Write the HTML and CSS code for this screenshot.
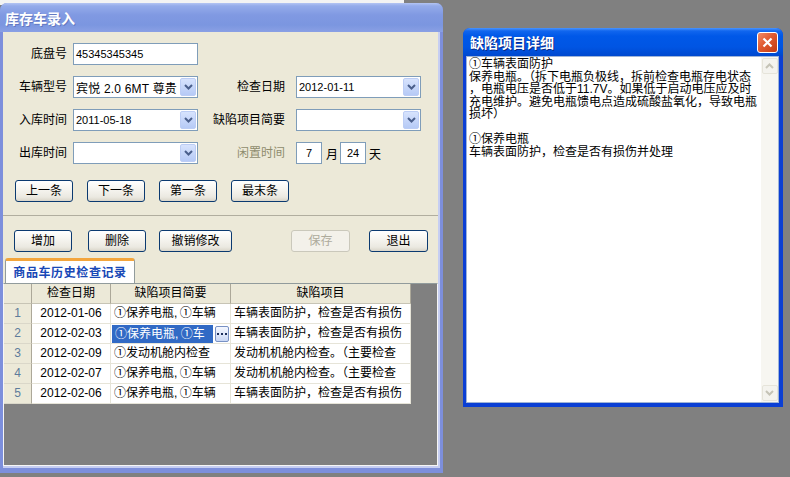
FILE: index.html
```html
<!DOCTYPE html>
<html lang="zh-CN">
<head>
<meta charset="utf-8">
<title>库存车录入</title>
<link rel="stylesheet" href="styles.css">
</head>
<body>
<div class="desktop">
  <div class="backstrip"></div>

  <section class="win win-main">
    <header class="title title-inactive"><span>库存车录入</span></header>
    <div class="client">
      <div class="panel">
        <div class="row">
          <span class="lb">底盘号</span>
          <div class="field"><span class="val">45345345345</span></div>
        </div>
        <div class="row">
          <span class="lb">车辆型号</span>
          <div class="field"><span class="val wide">宾悦 2.0 6MT 尊贵</span><span class="drop"><svg width="9" height="6" viewBox="0 0 9 6"><path d="M1 1 L4.5 4.5 L8 1" stroke="#4a5f8c" stroke-width="2" fill="none"/></svg></span></div>
          <span class="lb lb2">检查日期</span>
          <div class="field"><span class="val">2012-01-11</span><span class="drop"><svg width="9" height="6" viewBox="0 0 9 6"><path d="M1 1 L4.5 4.5 L8 1" stroke="#4a5f8c" stroke-width="2" fill="none"/></svg></span></div>
        </div>
        <div class="row">
          <span class="lb">入库时间</span>
          <div class="field"><span class="val">2011-05-18</span><span class="drop"><svg width="9" height="6" viewBox="0 0 9 6"><path d="M1 1 L4.5 4.5 L8 1" stroke="#4a5f8c" stroke-width="2" fill="none"/></svg></span></div>
          <span class="lb lb2">缺陷项目简要</span>
          <div class="field"><span class="val"></span><span class="drop"><svg width="9" height="6" viewBox="0 0 9 6"><path d="M1 1 L4.5 4.5 L8 1" stroke="#4a5f8c" stroke-width="2" fill="none"/></svg></span></div>
        </div>
        <div class="row">
          <span class="lb">出库时间</span>
          <div class="field"><span class="val"></span><span class="drop"><svg width="9" height="6" viewBox="0 0 9 6"><path d="M1 1 L4.5 4.5 L8 1" stroke="#4a5f8c" stroke-width="2" fill="none"/></svg></span></div>
          <span class="lb lb2 disabled">闲置时间</span>
          <div class="field small"><span class="val">7</span></div>
          <span class="unit">月</span>
          <div class="field small"><span class="val">24</span></div>
          <span class="unit unit2">天</span>
        </div>
        <div class="navbtns">
          <button class="btn">上一条</button>
          <button class="btn">下一条</button>
          <button class="btn">第一条</button>
          <button class="btn">最末条</button>
        </div>
      </div>

      <div class="actions">
        <button class="btn">增加</button>
        <button class="btn b-del">删除</button>
        <button class="btn b-undo">撤销修改</button>
        <button class="btn b-save" disabled>保存</button>
        <button class="btn b-exit">退出</button>
      </div>

      <div class="tabs"><div class="tab">商品车历史检查记录</div></div>

      <div class="gridwrap">
        <div class="grid">
          <div class="c h"></div>
          <div class="c h">检查日期</div>
          <div class="c h">缺陷项目简要</div>
          <div class="c h">缺陷项目</div>

          <div class="c rh">1</div>
          <div class="c date">2012-01-06</div>
          <div class="c">①保养电瓶,&thinsp;①车辆</div>
          <div class="c">车辆表面防护，检查是否有损伤</div>

          <div class="c rh">2</div>
          <div class="c date">2012-02-03</div>
          <div class="c cell-edit"><span class="selbox">①保养电瓶,&thinsp;①车</span><span class="ellip"><svg width="10" height="4" viewBox="0 0 10 4"><rect x="0" y="1" width="2" height="2" fill="#1c2f5c"/><rect x="4" y="1" width="2" height="2" fill="#1c2f5c"/><rect x="8" y="1" width="2" height="2" fill="#1c2f5c"/></svg></span></div>
          <div class="c">车辆表面防护，检查是否有损伤</div>

          <div class="c rh">3</div>
          <div class="c date">2012-02-09</div>
          <div class="c">①发动机舱内检查</div>
          <div class="c">发动机机舱内检查。（主要检查</div>

          <div class="c rh">4</div>
          <div class="c date">2012-02-07</div>
          <div class="c">①保养电瓶,&thinsp;①车辆</div>
          <div class="c">发动机机舱内检查。（主要检查</div>

          <div class="c rh">5</div>
          <div class="c date">2012-02-06</div>
          <div class="c">①保养电瓶,&thinsp;①车辆</div>
          <div class="c">车辆表面防护，检查是否有损伤</div>
        </div>
      </div>
    </div>
  </section>

  <section class="win win-detail">
    <header class="title title-active">
      <span>缺陷项目详细</span>
      <span class="close"><svg width="11" height="11" viewBox="0 0 11 11"><path d="M1.5 1.5 L9.5 9.5 M9.5 1.5 L1.5 9.5" stroke="#fff" stroke-width="2.2" fill="none"/></svg></span>
    </header>
    <div class="client2">
      <div class="memo">①车辆表面防护<br>保养电瓶。（拆下电瓶负极线，拆前检查电瓶存电状态<br>，电瓶电压是否低于11.7V。如果低于启动电压应及时<br>充电维护。避免电瓶馈电点造成硫酸盐氧化，导致电瓶<br>损坏）<br>&nbsp;<br>①保养电瓶<br>车辆表面防护，检查是否有损伤并处理</div>
      <div class="vscroll">
        <span class="sbtn"><svg width="9" height="6" viewBox="0 0 9 6"><path d="M1 5 L4.5 1.5 L8 5" stroke="#c5c3b6" stroke-width="2" fill="none"/></svg></span>
        <span class="sbtn"><svg width="9" height="6" viewBox="0 0 9 6"><path d="M1 1 L4.5 4.5 L8 1" stroke="#c5c3b6" stroke-width="2" fill="none"/></svg></span>
      </div>
    </div>
  </section>
</div>
</body>
</html>
```

FILE: styles.css
```css
* { box-sizing: border-box; }
html, body { margin: 0; padding: 0; }
body {
  background: #808080;
  font-family: "Liberation Sans", "Noto Sans CJK SC", sans-serif;
  font-size: 12px;
  color: #000;
}
.desktop {
  position: relative;
  width: 790px;
  height: 477px;
  overflow: hidden;
}
.backstrip {
  position: absolute;
  left: 0;
  top: 0;
  width: 404px;
  height: 5px;
  background: #f3f3f3;
}

/* windows */
.win {
  position: absolute;
  display: flex;
  flex-direction: column;
  border-radius: 7px 7px 0 0;
}
.win-main {
  left: 0;
  top: 3px;
  width: 443px;
  height: 470px;
  background: #7d8fdc;
}
.win-detail {
  left: 463px;
  top: 28px;
  width: 320px;
  height: 379px;
  background: #0b3fd4;
}
.title {
  flex: none;
  display: flex;
  align-items: center;
  color: #fff;
  font-family: "Noto Sans CJK SC", sans-serif;
  font-weight: bold;
  font-size: 14px;
  border-radius: 7px 7px 0 0;
}
.title-inactive {
  height: 29px;
  padding-left: 5px;
  background: linear-gradient(#b3c4f3 0, #94abea 3px, #8099e2 12px, #7b96e0 22px, #8aa0e4 29px);
  text-shadow: 1px 1px 0 #6479c2;
}
.title-active {
  height: 28px;
  padding: 0 5px 0 7px;
  justify-content: space-between;
  background: linear-gradient(#4a95ff 0, #1166ee 3px, #0058e8 8px, #0055e3 19px, #0048cf 28px);
  text-shadow: 1px 1px 0 #0a2a86;
}
.close {
  width: 21px;
  height: 21px;
  border: 1px solid #fff;
  border-radius: 3px;
  background: linear-gradient(135deg, #f08a68 0%, #e05a30 45%, #c33c14 100%);
  display: flex;
  align-items: center;
  justify-content: center;
}

/* main client area */
.client {
  flex: 1;
  margin: 0 5px 7px 3px;
  background: #ece9d8;
  display: flex;
  flex-direction: column;
  box-shadow: 0 2px 0 #c6cef2, 2px 0 0 #c6cef2, 2px 2px 0 #c6cef2;
}
.panel {
  flex: none;
  height: 184px;
  border-bottom: 1px solid #b1ae9f;
  padding-top: 11px;
  display: flex;
  flex-direction: column;
  gap: 11px;
}
.row {
  display: flex;
  align-items: center;
  height: 22px;
}
.lb {
  width: 64px;
  margin-right: 6px;
  text-align: right;
  line-height: 22px;
  white-space: nowrap;
}
.lb2 {
  width: 87px;
  margin-right: 11px;
}
.disabled { color: #8f8c6d; }
.field {
  position: relative;
  width: 125px;
  height: 22px;
  background: #fff;
  border: 1px solid #7f9db9;
  display: flex;
  align-items: center;
  padding-left: 2px;
  font-size: 11px;
  white-space: nowrap;
}
.field .wide { font-size: 12px; letter-spacing: 0.2px; }
.field.small {
  width: 26px;
  padding-left: 0;
  justify-content: center;
}
.unit { margin-left: 4px; margin-right: 2px; }
.unit2 { margin-left: 3px; }
.drop {
  position: absolute;
  right: 1px;
  top: 1px;
  width: 16px;
  height: 18px;
  border-radius: 2px;
  border: 1px solid #bccdf5;
  background: linear-gradient(#d7e3fd, #b6caf6);
  display: flex;
  align-items: center;
  justify-content: center;
}

/* buttons */
.btn {
  height: 22px;
  width: 58px;
  padding: 0;
  border: 1px solid #0b3a70;
  border-radius: 3px;
  background: linear-gradient(#ffffff 0%, #f6f5f0 40%, #ebe9e1 80%, #d9d5c9 100%);
  font-family: "Liberation Sans", "Noto Sans CJK SC", sans-serif;
  font-size: 12px;
  color: #000;
  line-height: 20px;
}
.btn[disabled] {
  border-color: #cac8bb;
  background: #f3f1ea;
  color: #aeab9c;
}
.navbtns {
  display: flex;
  gap: 14px;
  padding-left: 12px;
  margin-top: 5px;
}
.actions {
  flex: none;
  display: flex;
  margin-top: 14px;
  padding: 0 10px 0 11px;
}
.b-del { margin-left: 16px; }
.b-undo { margin-left: 13px; width: 73px; }
.b-save { margin-left: auto; width: 59px; }
.b-exit { margin-left: 19px; width: 59px; }

/* tabs */
.tabs {
  flex: none;
  display: flex;
  margin-top: 6px;
  padding-left: 2px;
}
.tab {
  width: 130px;
  height: 25px;
  background: #fff;
  border: 1px solid #919b9c;
  border-bottom: none;
  border-top: 3px solid #f3a53c;
  border-radius: 3px 3px 0 0;
  text-align: center;
  line-height: 21px;
  font-family: "Noto Sans CJK SC", sans-serif;
  font-weight: bold;
  font-size: 12px;
  letter-spacing: 0.6px;
  color: #1848b6;
}

/* grid */
.gridwrap {
  flex: 1;
  background: #808080;
  border: 1px solid #f6f6f6;
  border-top: 1px solid #919b9c;
}
.grid {
  display: grid;
  grid-template-columns: 28px 79px 120px 180px;
  grid-auto-rows: 20px;
  width: 407px;
}
.c {
  background: #fff;
  border-right: 1px solid #e6e4d8;
  border-bottom: 1px solid #e6e4d8;
  padding: 0 3px;
  line-height: 19px;
  white-space: nowrap;
  overflow: hidden;
}
.h {
  background: #ece9d8;
  border-right: 1px solid #aca899;
  border-bottom: 1px solid #c7c4b5;
  text-align: center;
}
.rh {
  background: #ece9d8;
  color: #5d7b9b;
  text-align: center;
  border-right: 1px solid #aca899;
  border-bottom: 1px solid #dad7c9;
}
.date { text-align: center; }
.cell-edit {
  padding: 0 0 0 1px;
  display: flex;
  align-items: center;
}
.selbox {
  width: 101px;
  height: 18px;
  background: #316ac5;
  color: #fff;
  padding-left: 3px;
  line-height: 18px;
  overflow: hidden;
}
.ellip {
  width: 14px;
  height: 16px;
  margin-left: 2px;
  border: 1px solid #7891c4;
  border-radius: 2px;
  background: linear-gradient(#f4f7ff, #c9d7f5);
  display: flex;
  align-items: center;
  justify-content: center;
}

/* detail window */
.client2 {
  flex: 1;
  margin: 0 4px 4px 3px;
  background: #fff;
  display: flex;
  border: 1px solid #9fb4d8;
}
.memo {
  flex: 1;
  padding: 1px 0 0 2px;
  line-height: 12.5px;
  white-space: nowrap;
  overflow: hidden;
}
.vscroll {
  flex: none;
  width: 17px;
  background: #f7f6f1;
  display: flex;
  flex-direction: column;
  justify-content: space-between;
  align-items: center;
  padding: 1px 0;
}
.sbtn {
  width: 16px;
  height: 16px;
  border: 1px solid #e6e4da;
  border-radius: 2px;
  background: #f4f3ee;
  display: flex;
  align-items: center;
  justify-content: center;
}
```
